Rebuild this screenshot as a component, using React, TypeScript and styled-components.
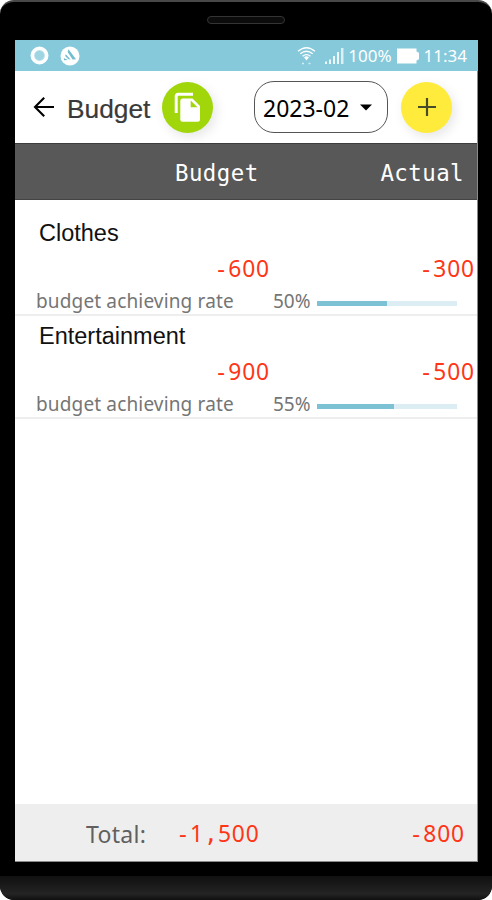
import React from "react";
import styled, { createGlobalStyle } from "styled-components";

const GlobalStyle = createGlobalStyle`
  *, *::before, *::after { box-sizing: border-box; }
  html, body { margin: 0; padding: 0; background: #fff; }
`;

const sans = `"Noto Sans", "Open Sans", sans-serif`;
const grotesk = `"Liberation Sans", Arial, sans-serif`;
const mono = `"DejaVu Sans Mono", monospace`;

const Phone = styled.div`
  width: 492px;
  height: 900px;
  display: flex;
  flex-direction: column;
  align-items: center;
  background: #000;
  border-top: 2px solid #484848;
  border-radius: 14px;
  overflow: hidden;
`;

const Earpiece = styled.div`
  width: 78px;
  height: 8px;
  margin: 14px 0 16px;
  flex: none;
  border: 1px solid #343434;
  border-radius: 4px;
  background: #0c0c0c;
`;

const Screen = styled.main`
  width: 463px;
  height: 822px;
  margin-left: 1px;
  flex: none;
  display: flex;
  flex-direction: column;
  background: #fff;
  border: solid #8a8a8a;
  border-width: 0 1px 1px 0;
`;

const Chin = styled.div`
  width: 100%;
  height: 24px;
  margin-top: auto;
  flex: none;
  background: linear-gradient(#101010, #242424 75%, #101010);
  border-radius: 0 0 14px 14px;
`;

const StatusBar = styled.header`
  height: 31px;
  flex: none;
  display: flex;
  align-items: center;
  justify-content: space-between;
  padding: 0 11px 0 15px;
  margin-right: -1px;
  background: #85c9db;
  color: #fff;
`;

const StatusGroup = styled.div<{ $gap: number }>`
  display: flex;
  align-items: center;
  gap: ${(p) => p.$gap}px;
  svg { display: block; }
`;

const StatusText = styled.span`
  font: 17px/24px ${sans};
`;

const AppBar = styled.div`
  height: 72px;
  flex: none;
  display: flex;
  align-items: center;
  padding: 0 0 0 18px;
  svg { display: block; }
`;

const BackButton = styled.button`
  width: 23px;
  height: 24px;
  padding: 0;
  border: 0;
  background: none;
`;

const Title = styled.h1`
  width: 95px;
  margin: 3px 0 0 11px;
  font: 400 26.3px/32px ${grotesk};
  -webkit-text-stroke: 0.2px #3a3a3a;
  color: #3a3a3a;
`;

const RoundButton = styled.button<{ $color: string }>`
  width: 51px;
  height: 51px;
  padding: 0;
  border: 0;
  border-radius: 50%;
  display: flex;
  align-items: center;
  justify-content: center;
  flex: none;
  background: ${(p) => p.$color};
  box-shadow: 3px 4px 12px rgba(0, 0, 0, 0.1);
`;

const MonthSelect = styled.button`
  width: 134px;
  height: 52px;
  margin: 0 13px 0 41px;
  padding: 1px 15px 0 8px;
  flex: none;
  display: flex;
  align-items: center;
  justify-content: space-between;
  border: 1px solid #555;
  border-radius: 20px;
  background: #fff;
  color: #000;
  font: 23px/30px ${sans};
`;

const TableHead = styled.div`
  height: 57px;
  flex: none;
  display: flex;
  align-items: center;
  justify-content: space-between;
  padding: 3px 13px 0 160px;
  background: #585858;
  border-top: 1px solid #3c3c3c;
  border-bottom: 1px solid #444;
  color: #fff;
  font: 22.4px/30px ${mono};
  letter-spacing: 0.45px;
`;

const List = styled.section`
  flex: 1;
  padding-top: 13px;
`;

const Row = styled.article`
  height: 103px;
  border-bottom: 2px solid #eee;
`;

const Category = styled.h2`
  margin: 0;
  padding: 6px 0 0 24px;
  font: 400 23.5px/28px ${grotesk};
  color: #111;
`;

const Amounts = styled.div`
  height: 39px;
  display: grid;
  grid-template-columns: 255px 1fr;
  align-items: center;
  padding: 5px 2px 0 0;
  justify-items: end;
`;

const AmountText = styled.span`
  font: 22.8px/30px ${sans};
  letter-spacing: 0.85px;
  color: #ff3517;
  white-space: nowrap;
`;

const MonoCell = styled.span`
  display: inline-block;
  width: 14px;
  font-family: ${mono};
`;

const Rate = styled.div`
  display: flex;
  align-items: center;
  height: 28px;
  padding: 1px 0 0 21px;
  font: 19px/26px ${sans};
  color: #757575;
`;

const RateLabel = styled.span`
  width: 237px;
  letter-spacing: 0.15px;
`;

const RateValue = styled.span`
  width: 44px;
`;

const Track = styled.div`
  width: 140px;
  height: 5px;
  margin-top: 5px;
  background: #dceef3;
`;

const Fill = styled.div`
  height: 100%;
  background: #7cc2d4;
`;

const Footer = styled.footer`
  height: 57px;
  flex: none;
  display: flex;
  align-items: center;
  justify-content: space-between;
  padding: 3px 12px 0 71px;
  background: #eee;
`;

const TotalLabel = styled.span`
  width: 90px;
  font: 23px/30px ${sans};
  letter-spacing: 0.3px;
  color: #606060;
`;

const TotalBudget = styled.div`
  display: flex;
  align-items: center;
`;

function Amount({ value }: { value: string }) {
  return (
    <AmountText>
      {value.split(/([-,])/).map((part, i) =>
        part === "-" || part === "," ? <MonoCell key={i}>{part}</MonoCell> : part
      )}
    </AmountText>
  );
}

const rows = [
  { name: "Clothes", budget: "-600", actual: "-300", rate: 50 },
  { name: "Entertainment", budget: "-900", actual: "-500", rate: 55 },
];

const RingIcon = () => (
  <svg width="19" height="19" viewBox="0 0 19 19">
    <circle cx="9.5" cy="9.5" r="7.2" fill="#b5dfea" stroke="#fff" strokeWidth="3.6" />
    <circle cx="9.5" cy="9.5" r="4.5" fill="#9fd4e2" />
  </svg>
);

const DiscIcon = () => (
  <svg width="20" height="20" viewBox="0 0 20 20">
    <circle cx="10" cy="10" r="9.5" fill="#fff" />
    <path d="M8.5 3.2 16 13.2l-3.4.2-5-7.4z" fill="#72bdd0" />
    <path d="m5.8 8.2 4.7 5.3-2-.2-3.4-3.4zM3.8 12l4 2.1-3.8.2z" fill="#72bdd0" />
  </svg>
);

const WifiIcon = () => (
  <svg width="19" height="19" viewBox="0 0 19 19" fill="none" stroke="#fff">
    <path d="M1 5.3Q9.5-2 18 5.3M3.3 7.8q6.2-5.1 12.4 0M5.6 10.2q3.9-3.2 7.8 0" strokeWidth="1.4" />
    <path d="m7 11.2 2.5 3.2 2.5-3.2q-2.5-1.8-5 0z" fill="#fff" stroke="none" />
    <path d="M5 17.5h2M11.5 17.5h2" strokeWidth="1.4" opacity=".65" />
  </svg>
);

const SignalIcon = () => (
  <svg width="19" height="16" viewBox="0 0 19 16" fill="#fff">
    <path d="M0 13.5h2V16H0zM4 11.5h2V16H4zM8 8h2v8H8zM12 4h2v12h-2z" opacity=".85" />
    <path d="M16 0h2.5v16H16z" opacity=".7" />
  </svg>
);

const BatteryIcon = () => (
  <svg width="24" height="16" viewBox="0 0 24 16">
    <path d="M1 .5h19.5v3l2.5 1.2v6.6l-2.5 1.2v3H1z" fill="#fff" />
  </svg>
);

const ArrowIcon = () => (
  <svg width="23" height="24" viewBox="0 0 23 24" fill="none" stroke="#000" strokeWidth="2.1">
    <path d="M21 12H2.5M11.2 2.8 2 12l9.2 9.2" />
  </svg>
);

const CopyIcon = () => (
  <svg width="27" height="31" viewBox="0 0 27 31">
    <path d="M2.2 21V4.3Q2.2 2.2 4.3 2.2H19" fill="none" stroke="#fff" strokeWidth="3" />
    <path d="M8.8 6.5h9.7l7.5 7.6v13.1q0 2.5-2.5 2.5H8.8q-2.5 0-2.5-2.5V9q0-2.5 2.5-2.5z" fill="#fff" />
    <path d="M16.7 8.5v6.8h6.8z" fill="#a0d60a" />
  </svg>
);

const PlusIcon = () => (
  <svg width="18" height="18" viewBox="0 0 18 18" stroke="#484a2c" strokeWidth="2.2">
    <path d="M0 9h18M9 0v18" />
  </svg>
);

const CaretIcon = () => (
  <svg width="12" height="7" viewBox="0 0 12 7">
    <path d="M0 .5h12L6 6.5z" />
  </svg>
);

export default function App() {
  return (
    <>
      <GlobalStyle />
      <Phone>
        <Earpiece />
        <Screen>
          <StatusBar>
            <StatusGroup $gap={11}>
              <RingIcon />
              <DiscIcon />
            </StatusGroup>
            <StatusGroup $gap={4}>
              <StatusGroup $gap={9}>
                <WifiIcon />
                <SignalIcon />
              </StatusGroup>
              <StatusText>100%</StatusText>
              <BatteryIcon />
              <StatusText>11:34</StatusText>
            </StatusGroup>
          </StatusBar>
          <AppBar>
            <BackButton aria-label="Back"><ArrowIcon /></BackButton>
            <Title>Budget</Title>
            <RoundButton $color="#a0d60a" aria-label="Copy"><CopyIcon /></RoundButton>
            <MonthSelect>
              2023-02
              <CaretIcon />
            </MonthSelect>
            <RoundButton $color="#ffeb3b" aria-label="Add"><PlusIcon /></RoundButton>
          </AppBar>
          <TableHead>
            <span>Budget</span>
            <span>Actual</span>
          </TableHead>
          <List>
            {rows.map((row) => (
              <Row key={row.name}>
                <Category>{row.name}</Category>
                <Amounts>
                  <Amount value={row.budget} />
                  <Amount value={row.actual} />
                </Amounts>
                <Rate>
                  <RateLabel>budget achieving rate</RateLabel>
                  <RateValue>{row.rate}%</RateValue>
                  <Track>
                    <Fill style={{ width: `${row.rate}%` }} />
                  </Track>
                </Rate>
              </Row>
            ))}
          </List>
          <Footer>
            <TotalBudget>
              <TotalLabel>Total:</TotalLabel>
              <Amount value="-1,500" />
            </TotalBudget>
            <Amount value="-800" />
          </Footer>
        </Screen>
        <Chin />
      </Phone>
    </>
  );
}
